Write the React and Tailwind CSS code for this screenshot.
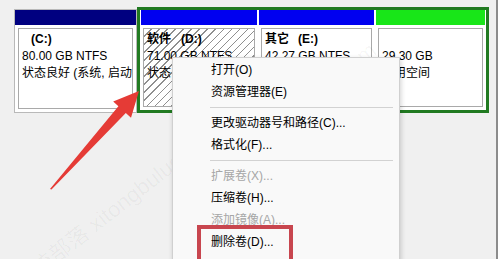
const hatch =
  'bg-[repeating-linear-gradient(135deg,#ffffff_0px,#ffffff_4.6px,#8f8f8f_4.6px,#8f8f8f_5.7px)]';

function Logical({ width, header, hatched, children }) {
  return (
    <div className={`flex flex-col px-[1px] ${width}`}>
      <div className={`h-[15px] shrink-0 ${header}`} />
      <div className="flex-1 px-[2px] pb-[3px] pt-[3px]">
        <div
          className={`h-full overflow-hidden whitespace-nowrap border border-[#a9a9a9] px-[3px] pt-[2px] leading-[17px] ${
            hatched ? hatch : 'bg-white'
          }`}
        >
          {children}
        </div>
      </div>
    </div>
  );
}

function Item({ children, disabled }) {
  return (
    <div className={`flex h-[22px] items-center pl-[38px] ${disabled ? 'text-[#a6a6a6]' : 'text-black'}`}>
      {children}
    </div>
  );
}

function Sep() {
  return <div className="my-[4px] ml-[37px] mr-[6px] h-px bg-[#d2d2d2]" />;
}

export default function App() {
  return (
    <div className="relative flex h-[259px] w-[502px] overflow-hidden bg-white font-['Liberation_Sans','Noto_Sans_CJK_SC',sans-serif] text-[12px] text-black">
      <div className="flex h-full w-[498px] shrink-0 items-start border-r-2 border-[#8c8c8c] bg-[#f0f0f0] pl-[14px] pt-[7px]">
        {/* primary partition */}
        <div className="mt-[2px] flex h-[104px] w-[123px] flex-col border border-[#b9b9b9] bg-white">
          <div className="h-[15px] shrink-0 bg-[#000080]" />
          <div className="flex-1 p-[3px]">
            <div className="h-full overflow-hidden whitespace-nowrap border border-[#a9a9a9] px-[3px] pt-[2px] leading-[17px]">
              <div className="pl-[9px] font-bold">(C:)</div>
              <div>80.00 GB NTFS</div>
              <div>状态良好 (系统, 启动, 页面文件, 活动, 故障转储, 主分区)</div>
            </div>
          </div>
        </div>

        {/* extended partition */}
        <div className="flex h-[106px] w-[352px] border-[3px] border-[#217a21] bg-white">
          <Logical width="w-[118px]" header="bg-[#0000f0]" hatched>
            <div className="font-bold">
              <span>软件</span>
              <span className="ml-[10px]">(D:)</span>
            </div>
            <div>71.00 GB NTFS</div>
            <div>状态良好 (逻辑驱动器)</div>
          </Logical>
          <Logical width="w-[117px]" header="bg-[#0000f0]">
            <div className="font-bold">
              <span>其它</span>
              <span className="ml-[9px]">(E:)</span>
            </div>
            <div>42.27 GB NTFS</div>
            <div>状态良好 (逻辑驱动器)</div>
          </Logical>
          <Logical width="flex-1" header="bg-[#18e618]">
            <div>&nbsp;</div>
            <div>29.30 GB</div>
            <div>可用空间</div>
          </Logical>
        </div>
      </div>

      {/* watermark */}
      <div className="pointer-events-none absolute left-[-10px] top-[190px] -rotate-[38deg] whitespace-nowrap text-[22px] text-black/[0.04]">
        系统部落 xitongbuluo.com
      </div>
      <div className="pointer-events-none absolute left-[230px] top-[80px] -rotate-[38deg] whitespace-nowrap text-[22px] text-black/[0.04]">
        xitongbuluo.com
      </div>

      {/* context menu */}
      <div className="absolute left-[172px] top-[57px] h-[215px] w-[228px] border border-[#d0d0d0] bg-[#f9f9f9] pt-[1px] shadow-[1px_2px_5px_rgba(0,0,0,0.18)]">
        <Item>打开(O)</Item>
        <Item>资源管理器(E)</Item>
        <Sep />
        <Item>更改驱动器号和路径(C)...</Item>
        <Item>格式化(F)...</Item>
        <Sep />
        <Item disabled>扩展卷(X)...</Item>
        <Item>压缩卷(H)...</Item>
        <Item disabled>添加镜像(A)...</Item>
        <Item>删除卷(D)...</Item>
      </div>

      {/* highlight box */}
      <div className="pointer-events-none absolute left-[197px] top-[225px] h-[50px] w-[96px] border-4 border-[#c8464f]" />

      {/* arrow */}
      <svg className="pointer-events-none absolute left-0 top-0" width="502" height="259" viewBox="0 0 502 259">
        <polygon
          points="50,189 51.5,189.5 125.8,113 131,117.7 139,91 113.2,101.5 118.4,106.2"
          fill="#e53b36"
        />
      </svg>
    </div>
  );
}
